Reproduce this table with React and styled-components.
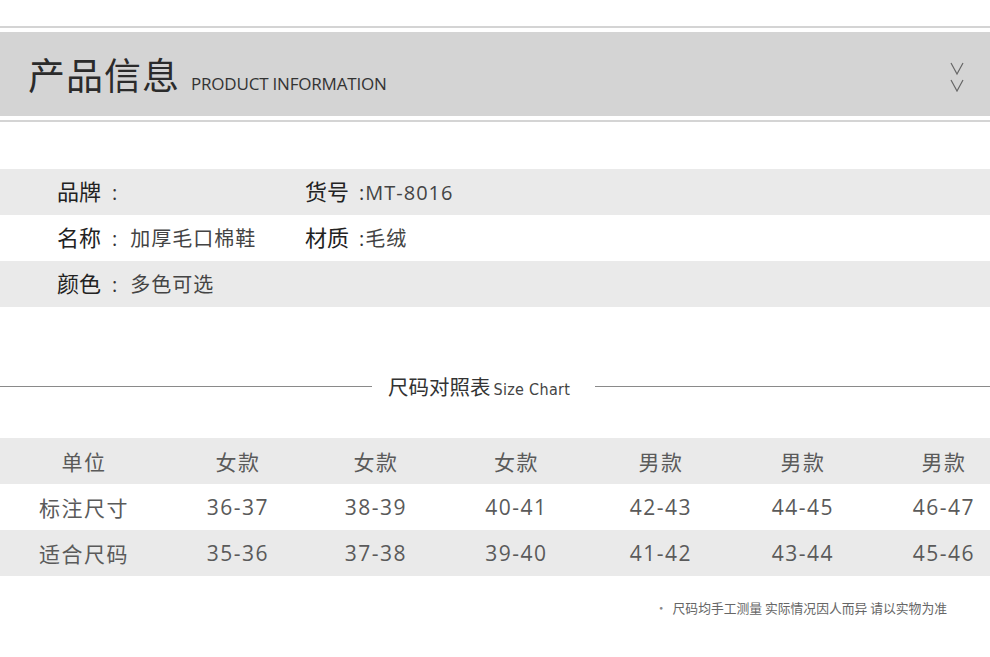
import React from "react";
import styled, { createGlobalStyle } from "styled-components";

const GlobalStyle = createGlobalStyle`
  body {
    margin: 0;
    background: #fff;
    font-family: "Open Sans", "Noto Sans CJK SC", sans-serif;
  }
`;

const info = [
  [
    { label: "品牌", value: "", wide: true },
    { label: "货号", value: "MT-8016" },
  ],
  [
    { label: "名称", value: "加厚毛口棉鞋", wide: true },
    { label: "材质", value: "毛绒" },
  ],
  [{ label: "颜色", value: "多色可选", wide: true }],
];

const sizes = [
  ["单位", "女款", "女款", "女款", "男款", "男款", "男款"],
  ["标注尺寸", "36-37", "38-39", "40-41", "42-43", "44-45", "46-47"],
  ["适合尺码", "35-36", "37-38", "39-40", "41-42", "43-44", "45-46"],
];

const ChevronIcon = () => (
  <svg width="14" height="30" viewBox="0 0 14 30" fill="none">
    <path d="M1 1 L7 12 L13 1" stroke="#666" strokeWidth="1.2" />
    <path d="M1 18 L7 29 L13 18" stroke="#666" strokeWidth="1.2" />
  </svg>
);

export default function App() {
  return (
    <Page>
      <GlobalStyle />
      <HeaderBlock>
        <Rule />
        <Band>
          <TitleGroup>
            <Title>产品信息</Title>
            <SubTitle>PRODUCT INFORMATION</SubTitle>
          </TitleGroup>
          <ChevronWrap>
            <ChevronIcon />
          </ChevronWrap>
        </Band>
        <Rule />
      </HeaderBlock>

      <InfoList>
        {info.map((row, i) => (
          <InfoRow key={i} shaded={i % 2 === 0}>
            {row.map((item, j) => (
              <InfoCell key={j}>
                <InfoLabel>{item.label}</InfoLabel>
                <Colon wide={item.wide}>:</Colon>
                <InfoValue>{item.value}</InfoValue>
              </InfoCell>
            ))}
          </InfoRow>
        ))}
      </InfoList>

      <Divider>
        <LeftLine />
        <DividerTitle>
          尺码对照表<small>Size Chart</small>
        </DividerTitle>
        <RightLine />
      </Divider>

      <SizeTable>
        {sizes.map((row, i) => (
          <SizeRow key={i} shaded={i % 2 === 0}>
            {row.map((cell, j) => (
              <SizeCell key={j}>{cell}</SizeCell>
            ))}
          </SizeRow>
        ))}
      </SizeTable>

      <Note>
        <Dot>•</Dot>尺码均手工测量 实际情况因人而异 请以实物为准
      </Note>
    </Page>
  );
}

const Page = styled.div`
  width: 990px;
  overflow: hidden;
  padding-top: 26px;
  padding-bottom: 30px;
`;

const HeaderBlock = styled.div`
  display: flex;
  flex-direction: column;
  gap: 4px;
`;

const Rule = styled.div`
  height: 2px;
  background: #d4d4d4;
`;

const Band = styled.div`
  height: 84px;
  background: #d4d4d4;
  display: flex;
  align-items: center;
  justify-content: space-between;
  padding: 0 26px 0 28px;
`;

const TitleGroup = styled.div`
  display: flex;
  align-items: baseline;
  gap: 11px;
`;

const Title = styled.h1`
  margin: 0;
  font-family: "Noto Sans CJK SC", sans-serif;
  font-weight: 400;
  font-size: 37px;
  letter-spacing: 1px;
  color: #2b2b2b;
`;

const SubTitle = styled.span`
  font-family: "Open Sans", sans-serif;
  font-size: 17px;
  letter-spacing: -0.2px;
  color: #333;
`;

const ChevronWrap = styled.div`
  display: flex;
  margin-top: 6px;
`;

const InfoList = styled.div`
  margin-top: 47px;
`;

const InfoRow = styled.div`
  height: 46px;
  display: grid;
  grid-template-columns: 248px 1fr;
  align-items: center;
  padding-left: 57px;
  padding-bottom: 4px;
  box-sizing: border-box;
  background: ${(p) => (p.shaded ? "#eaeaea" : "#fff")};
`;

const InfoCell = styled.div`
  display: flex;
  align-items: baseline;
  white-space: pre;
`;

const InfoLabel = styled.span`
  font-family: "Noto Sans CJK SC", sans-serif;
  font-size: 22px;
  color: #222;
`;

const Colon = styled.span`
  font-family: "Open Sans", sans-serif;
  font-size: 20px;
  color: #333;
  margin: ${(p) => (p.wide ? "0 13px 0 11px" : "0 1px 0 10px")};
`;

const InfoValue = styled.span`
  font-family: "Open Sans", "Noto Sans CJK SC", sans-serif;
  font-size: 20px;
  letter-spacing: 1px;
  color: #444;
`;

const Divider = styled.div`
  margin-top: 67px;
  height: 24px;
  display: flex;
  align-items: center;
`;

const LeftLine = styled.div`
  width: 372px;
  height: 1px;
  background: #8a8a8a;
`;

const RightLine = styled.div`
  flex: 1;
  height: 1px;
  background: #8a8a8a;
`;

const DividerTitle = styled.div`
  margin: 0 25px 0 16px;
  font-family: "Noto Sans CJK SC", sans-serif;
  font-size: 20.5px;
  color: #333;
  display: flex;
  align-items: baseline;

  small {
    font-family: "DejaVu Sans", sans-serif;
    font-stretch: condensed;
    font-size: 16px;
    letter-spacing: 0.3px;
    color: #444;
    margin-left: 3px;
  }
`;

const SizeTable = styled.div`
  margin-top: 40px;
`;

const SizeRow = styled.div`
  height: 46px;
  display: grid;
  grid-template-columns: 168px 140px 136px 145px 144px 140px 142px;
  align-items: center;
  background: ${(p) => (p.shaded ? "#eaeaea" : "#fff")};
`;

const SizeCell = styled.div`
  text-align: center;
  font-family: "Open Sans", "Noto Sans CJK SC", sans-serif;
  font-size: 21px;
  letter-spacing: 1.5px;
  color: #5a5a5a;
  white-space: nowrap;
`;

const Note = styled.div`
  margin-top: 22px;
  padding-right: 43px;
  text-align: right;
  font-family: "Noto Sans CJK SC", sans-serif;
  font-size: 12.8px;
  color: #666;
`;

const Dot = styled.span`
  color: #888;
  margin-right: 5px;
`;
